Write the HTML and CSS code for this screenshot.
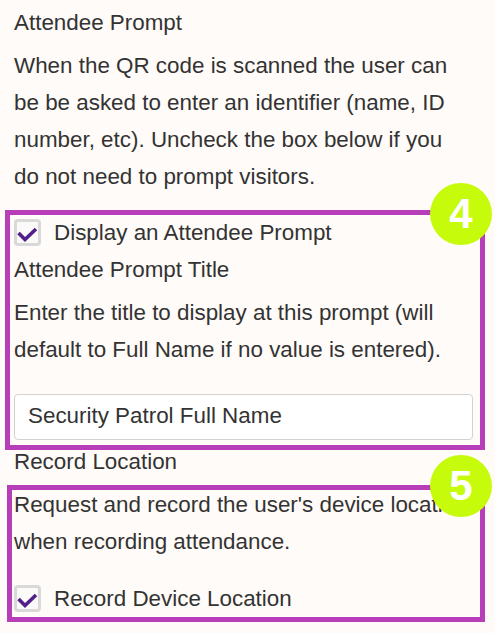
FILE: index.html
```html
<!DOCTYPE html>
<html lang="en">
<head>
<meta charset="utf-8">
<title>Attendee Prompt</title>
<link rel="stylesheet" href="styles.css">
</head>
<body>
<div class="page">
  <div class="label">Attendee Prompt</div>
  <p class="help">When the QR code is scanned the user can be be asked to enter an identifier (name, ID number, etc). Uncheck the box below if you do not need to prompt visitors.</p>
  <label class="check">
    <span class="box"><svg viewBox="0 0 27 27" width="27" height="27"><path d="M4.5 14 L11 20.5 L22 10" /></svg></span>
    <span>Display an Attendee Prompt</span>
  </label>
  <div class="label">Attendee Prompt Title</div>
  <p class="help">Enter the title to display at this prompt (will default to Full Name if no value is entered).</p>
  <div class="input">Security Patrol Full Name</div>
  <div class="label label-tight">Record Location</div>
  <p class="help">Request and record the user's device location when recording attendance.</p>
  <label class="check">
    <span class="box"><svg viewBox="0 0 27 27" width="27" height="27"><path d="M4.5 14 L11 20.5 L22 10" /></svg></span>
    <span>Record Device Location</span>
  </label>
</div>

<div class="callout callout-4"><span class="badge">4</span></div>
<div class="callout callout-5"><span class="badge">5</span></div>
</body>
</html>
```

FILE: styles.css
```css
html, body {
  margin: 0;
  padding: 0;
  background: #fffbf8;
}

body {
  font-family: "Liberation Sans", Arial, sans-serif;
  font-size: 22.4px;
  color: #333333;
  width: 495px;
  height: 633px;
  overflow: hidden;
}

.page {
  padding: 4px 0 0 14px;
  width: 459px;
}

.label {
  line-height: 37px;
}

.label-tight {
  margin-top: 3px;
}

.help {
  margin: 6px 0 0;
  line-height: 37px;
}

.check {
  display: flex;
  align-items: center;
  gap: 13px;
  margin-top: 19px;
  line-height: 37px;
}

.help + .check {
  margin-top: 19px;
}

.help + .input + .label + .help + .check {
  margin-top: 20px;
}

.box {
  position: relative;
  flex: none;
  width: 27px;
  height: 27px;
  box-sizing: border-box;
  border: 3px solid #d9d9d9;
  border-radius: 4px;
  background: #fbfaf9;
}

.box svg {
  position: absolute;
  left: -3px;
  top: -3px;
  fill: none;
  stroke: #52208a;
  stroke-width: 3.6;
}

.input {
  margin-top: 26px;
  height: 46px;
  box-sizing: border-box;
  border: 1px solid #d2d2d2;
  border-radius: 4px;
  background: #ffffff;
  padding: 0 13px 2px;
  line-height: 42px;
}

.callout {
  position: absolute;
  border: 5px solid #b83db9;
  box-sizing: border-box;
}

.callout-4 {
  left: 5px;
  top: 210px;
  width: 480px;
  height: 240px;
}

.callout-5 {
  left: 7px;
  top: 485px;
  width: 478px;
  height: 137px;
}

.badge {
  position: absolute;
  width: 62px;
  height: 62px;
  border-radius: 50%;
  background: #c6fc0c;
  color: #ffffff;
  font-weight: bold;
  font-size: 42px;
  display: flex;
  align-items: center;
  justify-content: center;
  line-height: 1;
}

.callout-4 .badge {
  left: 420px;
  top: -32px;
}

.callout-5 .badge {
  left: 418px;
  top: -35px;
}
```
